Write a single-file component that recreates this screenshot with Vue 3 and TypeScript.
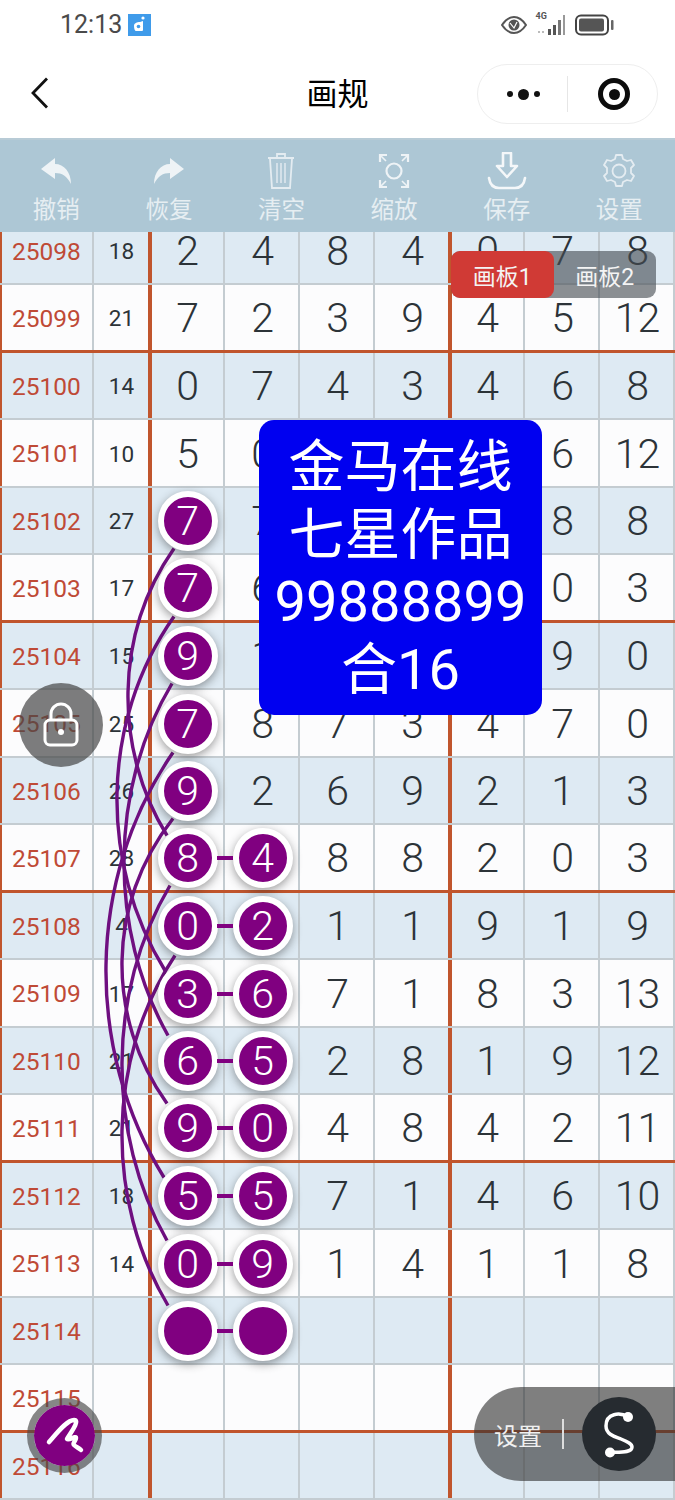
<script setup lang="ts">
type Row = { id: number; sum: string; vals: string[]; balls: number };
const raw: [number, string, string][] = [
  [25098, '18', '2,4,8,4,0,7,8'],
  [25099, '21', '7,2,3,9,4,5,12'],
  [25100, '14', '0,7,4,3,4,6,8'],
  [25101, '10', '5,0,,,,6,12'],
  [25102, '27', '7,7,,,,8,8'],
  [25103, '17', '7,6,,,,0,3'],
  [25104, '15', '9,1,,,,9,0'],
  [25105, '25', '7,8,7,3,4,7,0'],
  [25106, '26', '9,2,6,9,2,1,3'],
  [25107, '28', '8,4,8,8,2,0,3'],
  [25108, '4', '0,2,1,1,9,1,9'],
  [25109, '17', '3,6,7,1,8,3,13'],
  [25110, '21', '6,5,2,8,1,9,12'],
  [25111, '21', '9,0,4,8,4,2,11'],
  [25112, '18', '5,5,7,1,4,6,10'],
  [25113, '14', '0,9,1,4,1,1,8'],
  [25114, '', ',,,,,,'],
  [25115, '', ',,,,,,'],
  [25116, '', ',,,,,,'],
];
const ballCount = (id: number): number => {
  if (id >= 25107 && id <= 25114) return 2;
  if (id >= 25102 && id <= 25106) return 1;
  return 0;
};
const rows: Row[] = raw.map(([id, sum, v]) => ({ id, sum, vals: v.split(','), balls: ballCount(id) }));

const curve = (x0: number, y0: number, b: number, x1: number, y1: number): string => {
  const c = (8 * b - x0 - x1) / 6;
  const dy = y1 - y0;
  return `M${x0} ${y0} C${c} ${y0 + dy * 0.3} ${c} ${y1 - dy * 0.3} ${x1} ${y1}`;
};
const curves: string[] = [
  curve(174, 548, 128, 167, 835),
  curve(174, 616, 117, 165, 970),
  curve(172, 683, 124, 168, 1035),
  curve(173, 752, 106, 164, 1177),
  curve(173, 818, 122, 167, 1103),
  curve(170, 885, 122, 167, 1240),
  curve(175, 955, 122, 168, 1305),
];
const tools = ['撤销', '恢复', '清空', '缩放', '保存', '设置'];
</script>

<template>
  <div class="page">
    <header class="top">
      <div class="status">
        <span class="time">12:13</span>
        <svg class="appicon" width="23" height="22" viewBox="0 0 23 22">
          <rect width="23" height="22" fill="#3f9bea" />
          <path d="M6 12c0-3 3-4 6-4l3-1v9a1 1 0 0 1-1 1H8c-1 0-2-2-2-5z" fill="#fff" />
          <circle cx="15" cy="4" r="1.6" fill="#fff" />
          <circle cx="10.500" cy="12.500" r="1.800" fill="#3f9bea" />
        </svg>
        <span class="status-right">
          <svg width="26" height="18" viewBox="0 0 26 18">
            <path d="M1 9C5 3 9 1 13 1s8 2 12 8c-4 6-8 8-12 8S5 15 1 9z" fill="none" stroke="#555" stroke-width="2" />
            <circle cx="13" cy="9" r="5.500" fill="#555" />
            <path d="M9 7l4 5 3-6" fill="none" stroke="#fff" stroke-width="1.200" />
          </svg>
          <span class="net">
            <span class="net-text">4G</span>
            <svg width="31" height="22" viewBox="0 0 31 22">
              <rect x="2" y="17" width="2" height="2" fill="#bbb" />
              <rect x="6" y="17" width="2" height="2" fill="#bbb" />
              <rect x="12" y="15" width="3" height="6" fill="#555" />
              <rect x="17" y="11" width="3" height="10" fill="#555" />
              <rect x="22" y="6" width="3" height="15" fill="#777" />
              <rect x="27" y="1" width="2" height="20" fill="#999" />
            </svg>
          </span>
          <svg width="40" height="22" viewBox="0 0 40 22">
            <rect x="1" y="1.500" width="32" height="19" rx="5" fill="none" stroke="#444" stroke-width="2" />
            <rect x="4" y="4.500" width="25" height="13" rx="2" fill="#555" />
            <rect x="36" y="6" width="2.500" height="10" rx="1" fill="#666" />
          </svg>
        </span>
      </div>
      <nav class="nav">
        <svg class="back" width="20" height="32" viewBox="0 0 20 32">
          <path d="M17 1.500 3 16l14 14.500" fill="none" stroke="#111" stroke-width="2.800" />
        </svg>
        <h1 class="title">画规</h1>
        <div class="capsule">
          <span class="dots"><i class="dot" /><i class="dot big" /><i class="dot" /></span>
          <span class="cap-div" />
          <span class="target"><i /></span>
        </div>
      </nav>
    </header>

    <div class="toolbar">
      <div v-for="(t, i) in tools" :key="t" class="tool">
        <svg class="ticon" width="40" height="38" viewBox="0 0 40 38">
          <path v-if="i === 0" d="M19 6 5 17l14 10v-6c7 0 12 3 16 11 0-12-7-20-16-20z" fill="#eef3f6" />
          <path v-else-if="i === 1" d="M21 6l14 11-14 10v-6c-7 0-12 3-16 11 0-12 7-20 16-20z" fill="#eef3f6" />
          <g v-else-if="i === 2" fill="none" stroke="#e4ecf1" stroke-width="1.800">
            <path d="M7 6h26M16 5V2h8v3M9 7l2 29h18l2-29" />
            <path d="M16 11v20M20 11v20M24 11v20" stroke-width="1.400" />
          </g>
          <g v-else-if="i === 3" fill="none" stroke="#eef3f6" stroke-width="2.200">
            <circle cx="20" cy="19" r="7.500" />
            <path d="M6 10V3h7M34 10V3h-7M6 28v7h7M34 28v7h-7" />
            <path d="M6 3l6 6M34 3l-6 6M6 35l6-6M34 35l-6-6" stroke-width="1.600" />
          </g>
          <g v-else-if="i === 4" fill="none" stroke="#f4f7f9" stroke-width="2.600">
            <path d="M16 1h8v13h6L20 25 10 14h6z" stroke-linejoin="round" />
            <path d="M2 26c1 7 5 10 10 10h16c5 0 9-3 10-10" stroke-linecap="round" />
          </g>
          <g v-else fill="none" stroke="#e4ecf1" stroke-width="1.800" stroke-linejoin="round">
            <circle cx="20" cy="19" r="6.500" />
            <path d="M17 3h6l1 4 4 2 4-1 3 5-3 3v5l3 3-3 5-4-1-4 2-1 4h-6l-1-4-4-2-4 1-3-5 3-3v-5l-3-3 3-5 4 1 4-2z" />
          </g>
        </svg>
        <span class="tlabel">{{ t }}</span>
      </div>
    </div>

    <main class="board">
      <div
        v-for="(r, ri) in rows"
        :key="r.id"
        class="row"
        :class="{ tint: ri % 2 === 0, group: (r.id - 25099) % 4 === 0 }"
      >
        <div class="cell idc">{{ r.id }}</div>
        <div class="cell sumc">{{ r.sum }}</div>
        <div v-for="(v, i) in r.vals" :key="i" class="cell num" :class="{ split: i === 0 || i === 4 }">
          <span v-if="i < r.balls" class="ball" :class="{ linked: i === 1 }">{{ v }}</span>
          <template v-else>{{ v }}</template>
        </div>
      </div>

      <svg class="curves" width="675" height="1282.500" viewBox="0 217.500 675 1282.500">
        <path v-for="(d, i) in curves" :key="i" :d="d" fill="none" stroke="#6f0f80" stroke-width="3.400" />
      </svg>

      <div class="tabs">
        <span class="tab on">画板1</span>
        <span class="tab">画板2</span>
      </div>

      <div class="promo">
        <div>金马在线</div>
        <div>七星作品</div>
        <div>99888899</div>
        <div>合16</div>
      </div>

      <div class="lock">
        <svg width="36" height="46" viewBox="0 0 36 46">
          <path d="M8 18v-6a10 10 0 0 1 20 0v6" fill="none" stroke="#fff" stroke-width="3" />
          <rect x="2" y="18" width="32" height="25" rx="5" fill="none" stroke="#fff" stroke-width="3" />
          <circle cx="18" cy="30" r="3" fill="#fff" />
        </svg>
      </div>

      <div class="pen">
        <span class="pen-in">
          <svg width="40" height="40" viewBox="0 0 40 40">
            <path d="M4 27C12 18 22 5 29 5C36 5 24 20 22 24C24 26 31 20 31 23C31 26 27 28 29 30C31 32 34 33 36 35" fill="none" stroke="#fff" stroke-width="4.500" stroke-linecap="round" stroke-linejoin="round" />
          </svg>
        </span>
      </div>

      <div class="dock">
        <span class="dock-label">设置</span>
        <span class="dock-div" />
        <span class="dock-s">
          <svg width="74" height="74" viewBox="0 0 74 74">
            <path d="M46 20C38 15 24 16 24 29C24 38 34 40 39 42C46 45 50 47 50 50C50 56 38 55 28 55.500" fill="none" stroke="#fff" stroke-width="3.500" />
            <circle cx="46" cy="20" r="5" fill="#fff" />
            <circle cx="28" cy="55.500" r="5" fill="#fff" />
          </svg>
        </span>
      </div>
    </main>
  </div>
</template>

<style scoped>
.page {
  width: 675px;
  height: 1500px;
  overflow: hidden;
  position: relative;
  background: #fff;
  font-family: Roboto, "Noto Sans CJK SC", sans-serif;
}
.top {
  height: 138px;
  background: #fff;
  position: relative;
}
.status {
  height: 50px;
  display: flex;
  align-items: center;
  padding-left: 60px;
  color: #4a4a4a;
}
.time {
  font-size: 25px;
  line-height: 50px;
  width: 68px;
}
.appicon {
  margin-top: -1px;
}
.status-right {
  margin-left: auto;
  margin-right: 60px;
  display: flex;
  align-items: center;
  gap: 8.500px;
}
.net {
  position: relative;
  display: block;
  height: 22px;
}
.net-text {
  position: absolute;
  left: 0;
  top: -3px;
  font-size: 9px;
  font-weight: 700;
  color: #555;
}
.nav {
  height: 88px;
  position: relative;
  display: flex;
  align-items: center;
  justify-content: center;
}
.back {
  position: absolute;
  left: 30px;
  top: 27px;
}
.title {
  margin: 2px 0 0;
  font-size: 31px;
  font-weight: 400;
  color: #000;
  line-height: 86px;
}
.capsule {
  position: absolute;
  left: 477px;
  top: 14px;
  width: 181px;
  height: 60px;
  box-sizing: border-box;
  border: 1.500px solid #eeeeee;
  border-radius: 30px;
  display: flex;
  align-items: center;
}
.dots {
  width: 87px;
  display: flex;
  justify-content: center;
  align-items: center;
  gap: 5px;
  padding-left: 2px;
}
.dot {
  width: 6px;
  height: 6px;
  border-radius: 50%;
  background: #111;
}
.dot.big {
  width: 11px;
  height: 11px;
}
.cap-div {
  width: 1px;
  height: 36px;
  background: #e6e6e6;
}
.target {
  width: 32px;
  height: 32px;
  box-sizing: border-box;
  border: 5px solid #0c0c0c;
  border-radius: 50%;
  margin-left: 30px;
  display: flex;
  align-items: center;
  justify-content: center;
}
.target i {
  width: 11px;
  height: 11px;
  border-radius: 50%;
  background: #0c0c0c;
}
.toolbar {
  height: 94px;
  background: #adc7d5;
  display: grid;
  grid-template-columns: repeat(6, 112.600px);
  position: relative;
  z-index: 5;
  box-sizing: border-box;
  padding-top: 12px;
  border-top: 2px solid #b8cbd6;
}
.tool {
  display: flex;
  flex-direction: column;
  align-items: center;
}
.ticon {
  height: 38px;
}
.tlabel {
  font-size: 23.500px;
  line-height: 30px;
  margin-top: 5px;
  color: #e6eef2;
}
.board {
  position: relative;
  margin-top: -14.500px;
}
.row {
  display: grid;
  grid-template-columns: 94px 56px repeat(7, 75px);
  height: 67.500px;
  background: #fcfcfd;
  box-sizing: border-box;
  border-bottom: 2px solid #c4ccd1;
}
.row.tint {
  background: #deeaf3;
}
.row.group {
  border-bottom: 3px solid #c0552d;
}
.cell {
  display: flex;
  align-items: center;
  justify-content: center;
  box-sizing: border-box;
  border-right: 2px solid #c4ccd1;
  min-width: 0;
  position: relative;
  padding-top: 2px;
}
.idc {
  font-size: 24.500px;
  color: #bf4a36;
  border-left: 2px solid #c0552d;
  justify-content: flex-start;
  padding-left: 10px;
}
.sumc {
  font-size: 22.500px;
  color: #2c3338;
  border-right: 2px solid #c0552d;
  padding-left: 1px;
}
.num {
  font-size: 41px;
  font-weight: 350;
  color: #2c3338;
  padding-left: 2px;
}
.num.split {
  border-left: 2px solid #c0552d;
  padding-left: 0;
}
.num:nth-child(6) {
  border-right: 2px solid #c0552d;
}
.ball {
  width: 60px;
  height: 60px;
  box-sizing: border-box;
  flex: none;
  border: 6px solid #fff;
  border-radius: 50%;
  background: #800080;
  color: #fff;
  display: flex;
  align-items: center;
  justify-content: center;
  position: relative;
  z-index: 2;
  box-shadow: 0 3px 10px rgba(40, 40, 40, 0.45);
}
.ball.linked::before {
  content: "";
  position: absolute;
  left: -22px;
  top: 22px;
  width: 16px;
  height: 4px;
  background: #800080;
}
.curves {
  position: absolute;
  left: 0;
  top: 0;
  z-index: 1;
  pointer-events: none;
}
.tabs {
  position: absolute;
  left: 451px;
  top: 33.500px;
  display: flex;
  z-index: 3;
  background: rgba(70, 76, 82, 0.62);
  border-radius: 9px;
}
.tab {
  width: 102.500px;
  height: 47px;
  display: flex;
  align-items: center;
  justify-content: center;
  font-size: 23px;
  color: #f4f4f4;
  border-radius: 9px;
}
.tab.on {
  background: #d03a35;
}
.promo {
  position: absolute;
  left: 259px;
  top: 202.500px;
  width: 283px;
  height: 295px;
  box-sizing: border-box;
  padding-top: 14px;
  background: #0000f0;
  border-radius: 15px;
  color: #fff;
  font-size: 56px;
  line-height: 67.500px;
  text-align: center;
  z-index: 3;
  font-weight: 400;
}
.lock {
  position: absolute;
  left: 19px;
  top: 465px;
  width: 84px;
  height: 84px;
  border-radius: 50%;
  background: rgba(70, 70, 70, 0.7);
  display: flex;
  align-items: center;
  justify-content: center;
  z-index: 4;
}
.pen {
  position: absolute;
  left: 27px;
  top: 1180px;
  width: 75px;
  height: 75px;
  box-sizing: border-box;
  border: 7px solid rgba(70, 70, 70, 0.65);
  background-clip: padding-box;
  border-radius: 50%;
  z-index: 4;
  display: flex;
}
.pen-in {
  flex: 1;
  border-radius: 50%;
  background: #800080;
  display: flex;
  align-items: center;
  justify-content: center;
}
.dock {
  position: absolute;
  left: 474px;
  top: 1169.500px;
  width: 201px;
  height: 94px;
  border-radius: 47px 0 0 47px;
  background: rgba(50, 50, 50, 0.62);
  display: flex;
  align-items: center;
  z-index: 4;
}
.dock-label {
  font-size: 24px;
  color: #f0f0f0;
  margin-left: 20px;
}
.dock-div {
  width: 1.500px;
  height: 30px;
  background: #ddd;
  margin-left: 20px;
}
.dock-s {
  width: 74px;
  height: 74px;
  border-radius: 50%;
  background: #262b30;
  margin-left: 18px;
}
.dock-s svg {
  display: block;
}
</style>

<style>
html,
body {
  margin: 0;
  background: #fff;
}
</style>
